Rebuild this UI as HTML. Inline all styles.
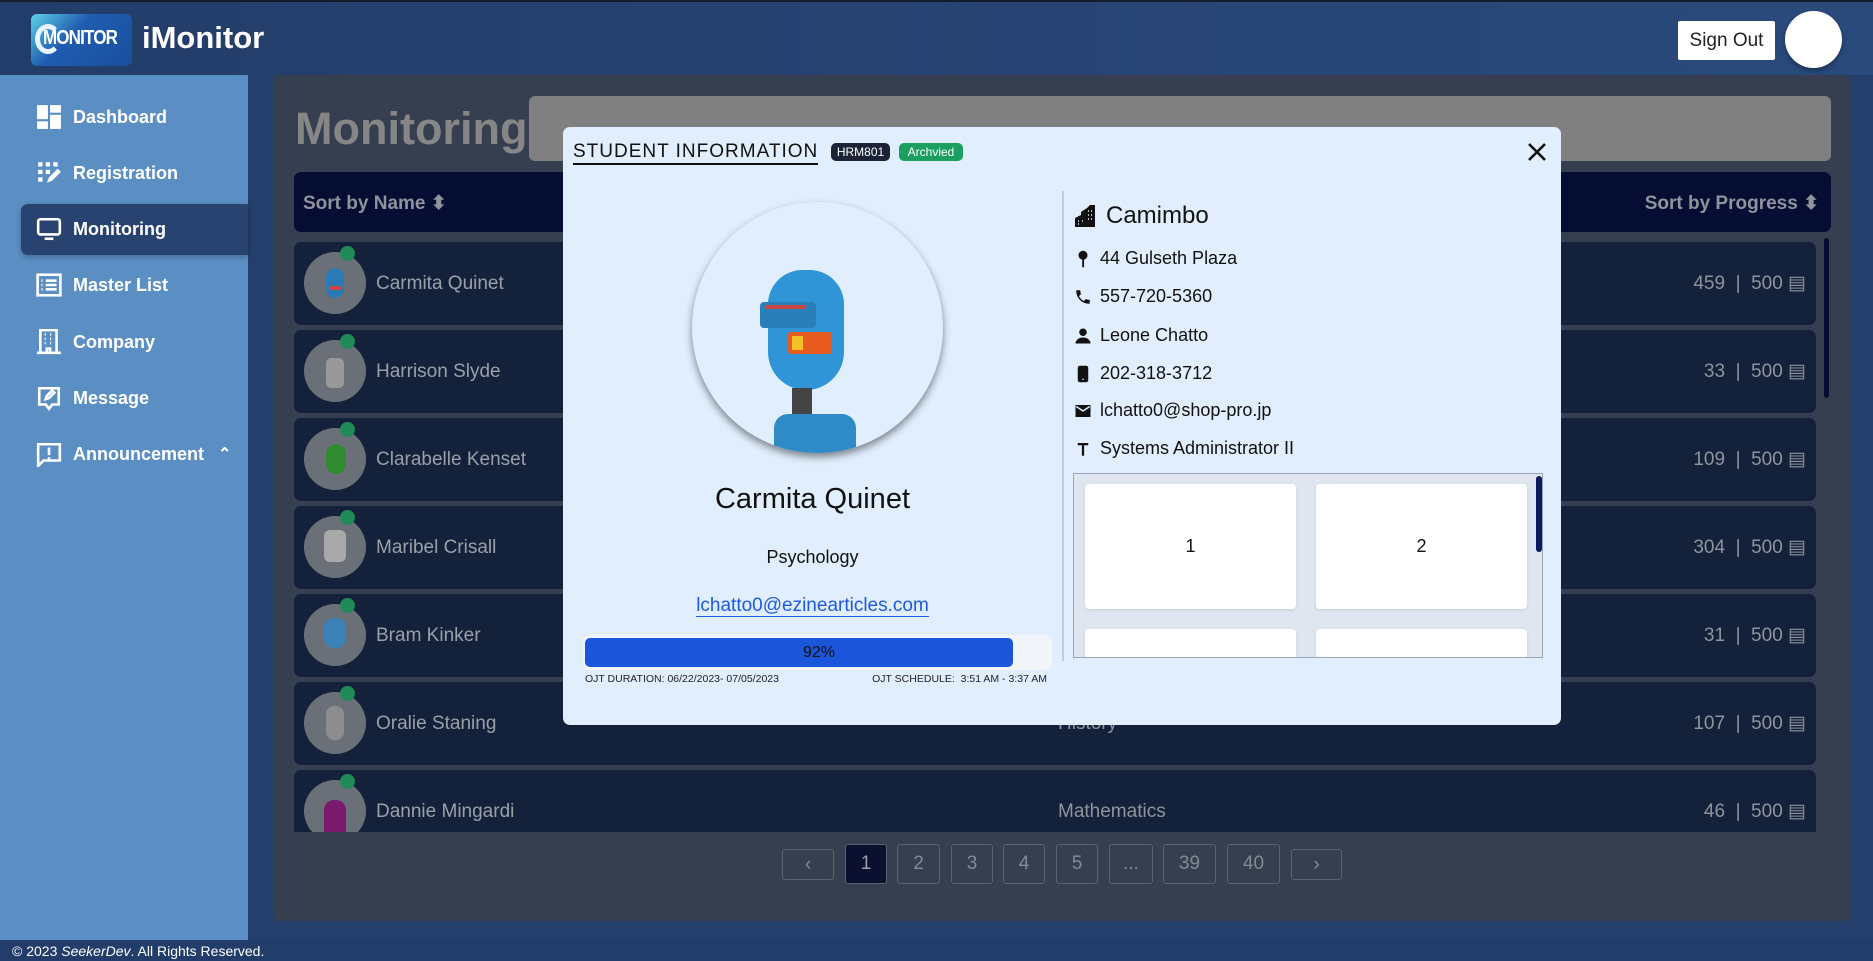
<!DOCTYPE html>
<html><head><meta charset="utf-8">
<style>
*{box-sizing:border-box;margin:0;padding:0}
body{width:1873px;height:961px;overflow:hidden;font-family:"Liberation Sans",sans-serif;background:#243f6c;position:relative}
.abs{position:absolute}
#hdr{left:0;top:0;width:1873px;height:75px;background:linear-gradient(90deg,#233d6a,#2a4a7c);border-top:2px solid #151d2c}
#side{left:0;top:75px;width:248px;height:865px;background:#5b8fc3}
.nav{position:absolute;left:36px;height:30px;color:#fff;font-weight:bold;font-size:18px;display:flex;align-items:center}
.nav svg{width:26px;height:26px;margin-right:11px;fill:none;stroke:#fff;stroke-width:2.4}
#act{left:21px;top:204px;width:227px;height:51px;background:#28436f;border-radius:7px 0 0 7px;box-shadow:0 2px 6px rgba(0,0,0,.25)}
#foot{left:0;top:940px;width:1873px;height:21px;background:#233d6b;color:#fff;font-size:14px;padding:3px 0 0 12px}
#panel{left:274px;top:75px;width:1576px;height:846px;background:#363f50;border-radius:4px;overflow:hidden}
.row{position:absolute;left:20px;width:1522px;height:83px;background:#14213a;border-radius:7px}
.av{position:absolute;left:10px;top:10px;width:62px;height:62px;border-radius:50%;background:#6b7078;overflow:hidden}
.dot{position:absolute;left:46px;top:4px;width:15px;height:15px;border-radius:50%;background:#1f8a58}
.nm{position:absolute;left:82px;top:0;line-height:83px;font-size:19px;color:#9aa0a8}
.pr{position:absolute;right:10px;top:0;line-height:83px;font-size:19px;color:#8f949c}
.sub{position:absolute;left:764px;top:0;line-height:83px;font-size:19px;color:#8f949c}
.pg{position:absolute;top:844px;height:40px;border:1px solid #5a6170;border-radius:3px;color:#848a94;font-size:19px;text-align:center;line-height:38px}
#modal{left:563px;top:127px;width:998px;height:598px;background:#e0eefd;border-radius:7px}
.info{position:absolute;left:511px;font-size:18px;color:#111;display:flex;align-items:center}
.info svg{width:18px;height:18px;margin-right:8px;fill:#111}
.card{position:absolute;width:211px;height:125px;background:#fff;border-radius:4px;box-shadow:0 1px 3px rgba(0,0,0,.1);font-size:18px;text-align:center;line-height:125px;color:#111}
</style></head><body>
<div id="hdr" class="abs">
 <div class="abs" style="left:31px;top:12px;width:101px;height:52px;border-radius:6px;background:linear-gradient(135deg,#5fd0e8,#1f5db0 40%,#1a4e9e);overflow:hidden">
  <div class="abs" style="left:4px;top:10px;width:26px;height:30px;border:5px solid #e8f4ff;border-radius:50%;border-right-color:transparent"></div>
  <div class="abs" style="left:12px;top:13px;color:#fff;font-weight:bold;font-size:20px;letter-spacing:-1px;transform:scaleX(.85);transform-origin:left">MONITOR</div>
 </div>
 <div class="abs" style="left:142px;top:18px;color:#fff;font-weight:bold;font-size:31px">iMonitor</div>
 <div class="abs" style="left:1678px;top:19px;width:97px;height:39px;background:#fff;border-radius:2px;font-size:19px;line-height:39px;text-align:center;color:#222">Sign Out</div>
 <div class="abs" style="left:1785px;top:9px;width:57px;height:57px;border-radius:50%;background:#fff;box-shadow:0 3px 5px rgba(0,0,0,.3)"></div>
</div>
<div id="side" class="abs"></div>
<div id="act" class="abs"></div>
<div class="nav" style="top:102px"><svg viewBox="0 0 24 24" style="fill:#fff;stroke:none"><rect x="1" y="1" width="10" height="13"/><rect x="13" y="1" width="10" height="7"/><rect x="1" y="16" width="10" height="7"/><rect x="13" y="10" width="10" height="13"/></svg>Dashboard</div>
<div class="nav" style="top:158px"><svg viewBox="0 0 24 24" style="fill:#fff;stroke:none"><rect x="2" y="2" width="4" height="4"/><rect x="9" y="2" width="4" height="4"/><rect x="16" y="2" width="4" height="4"/><rect x="2" y="9" width="4" height="4"/><rect x="9" y="9" width="4" height="4"/><rect x="2" y="16" width="4" height="4"/><path d="M10 21l2-5 8-8 3 3-8 8z"/></svg>Registration</div>
<div class="nav" style="top:214px"><svg viewBox="0 0 24 24"><rect x="2" y="3" width="20" height="14" rx="2"/><path d="M8 21h8"/></svg>Monitoring</div>
<div class="nav" style="top:270px"><svg viewBox="0 0 24 24"><rect x="1.5" y="2.5" width="21" height="19"/><path d="M9 8h10M9 12h10M9 16h10M5 8h1M5 12h1M5 16h1"/></svg>Master List</div>
<div class="nav" style="top:327px"><svg viewBox="0 0 24 24"><path d="M4 22V1h15v21M1 22h22M8 5h1M13 5h1M8 9h1M13 9h1M8 13h1M13 13h1M10 22v-4h3v4"/></svg>Company</div>
<div class="nav" style="top:383px"><svg viewBox="0 0 24 24"><path d="M3 3h18v15h-6l-3 4-3-4H3z"/><path d="M9 13l1-3 5-5 2 2-5 5z"/></svg>Message</div>
<div class="nav" style="top:439px"><svg viewBox="0 0 24 24"><path d="M2 3h20v15H7l-5 5z"/><path d="M12 6v7M12 15v2"/></svg>Announcement<span style="margin-left:14px;font-size:16px">&#8963;</span></div>
<div id="panel" class="abs">
 <div class="abs" style="left:21px;top:28px;font-size:45px;font-weight:bold;color:#868686">Monitoring</div>
 <div class="abs" style="left:255px;top:21px;width:1302px;height:65px;background:#808080;border-radius:6px"></div>
 <div class="abs" style="left:20px;top:97px;width:1537px;height:60px;background:#050d33;border-radius:7px;color:#8f949c;font-weight:bold;font-size:19px">
  <span class="abs" style="left:9px;top:20px">Sort by Name &#11021;</span>
  <span class="abs" style="right:12px;top:20px">Sort by Progress &#11021;</span>
 </div>
 <div class="abs" style="left:0;top:167px;width:1576px;height:590px;overflow:hidden">
  <div class="row" style="top:0"><div class="av"><div class="abs" style="left:22px;top:16px;width:18px;height:30px;border-radius:9px;background:#2a7ab5"></div><div class="abs" style="left:25px;top:34px;width:12px;height:4px;background:#c44"></div></div><div class="dot"></div><div class="nm">Carmita Quinet</div><div class="pr">459 &nbsp;|&nbsp; 500 &#9636;</div></div>
  <div class="row" style="top:88px"><div class="av"><div class="abs" style="left:22px;top:18px;width:18px;height:30px;border-radius:5px;background:#999"></div></div><div class="dot"></div><div class="nm">Harrison Slyde</div><div class="pr">33 &nbsp;|&nbsp; 500 &#9636;</div></div>
  <div class="row" style="top:176px"><div class="av"><div class="abs" style="left:22px;top:16px;width:20px;height:30px;border-radius:10px;background:#2f8a30"></div></div><div class="dot"></div><div class="nm">Clarabelle Kenset</div><div class="pr">109 &nbsp;|&nbsp; 500 &#9636;</div></div>
  <div class="row" style="top:264px"><div class="av"><div class="abs" style="left:20px;top:14px;width:22px;height:32px;border-radius:6px;background:#a9a9a9"></div></div><div class="dot"></div><div class="nm">Maribel Crisall</div><div class="pr">304 &nbsp;|&nbsp; 500 &#9636;</div></div>
  <div class="row" style="top:352px"><div class="av"><div class="abs" style="left:20px;top:14px;width:22px;height:30px;border-radius:10px;background:#3a82b8"></div></div><div class="dot"></div><div class="nm">Bram Kinker</div><div class="pr">31 &nbsp;|&nbsp; 500 &#9636;</div></div>
  <div class="row" style="top:440px"><div class="av"><div class="abs" style="left:22px;top:14px;width:18px;height:34px;border-radius:8px;background:#8d8d8d"></div></div><div class="dot"></div><div class="nm">Oralie Staning</div><div class="sub">History</div><div class="pr">107 &nbsp;|&nbsp; 500 &#9636;</div></div>
  <div class="row" style="top:528px"><div class="av"><div class="abs" style="left:20px;top:20px;width:22px;height:40px;border-radius:10px;background:#7a1a6e"></div></div><div class="dot"></div><div class="nm">Dannie Mingardi</div><div class="sub">Mathematics</div><div class="pr">46 &nbsp;|&nbsp; 500 &#9636;</div></div>
 </div>
 <div class="abs" style="left:1550px;top:163px;width:5px;height:160px;background:#050d33;border-radius:3px"></div>
</div>
<div class="pg" style="left:782px;width:52px;top:849px;height:31px;line-height:29px">&#8249;</div>
<div class="pg" style="left:845px;width:42px;background:#0b1030;color:#9aa0aa">1</div>
<div class="pg" style="left:897px;width:43px">2</div>
<div class="pg" style="left:951px;width:42px">3</div>
<div class="pg" style="left:1003px;width:42px">4</div>
<div class="pg" style="left:1056px;width:42px">5</div>
<div class="pg" style="left:1109px;width:44px">...</div>
<div class="pg" style="left:1163px;width:53px">39</div>
<div class="pg" style="left:1227px;width:53px">40</div>
<div class="pg" style="left:1291px;width:51px;top:849px;height:31px;line-height:29px">&#8250;</div>
<div id="foot" class="abs">© 2023 <i>SeekerDev</i>. All Rights Reserved.</div>

<div id="modal" class="abs">
 <div class="abs" style="left:10px;top:14px;font-size:19px;letter-spacing:1px;color:#111;border-bottom:2px solid #111;line-height:22px">STUDENT INFORMATION</div>
 <div class="abs" style="left:268px;top:16px;width:59px;height:18px;background:#1b2436;color:#fff;border-radius:5px;font-size:12px;text-align:center;line-height:18px">HRM801</div>
 <div class="abs" style="left:336px;top:16px;width:64px;height:18px;background:#1a9f5f;color:#fff;border-radius:5px;font-size:12px;text-align:center;line-height:18px">Archvied</div>
 <svg class="abs" style="left:964px;top:15px" width="20" height="20" viewBox="0 0 20 20"><path d="M2 2L18 18M18 2L2 18" stroke="#111" stroke-width="2.6"/></svg>
 <div class="abs" style="left:499px;top:64px;width:2px;height:470px;background:#c6ccd6"></div>
 <div class="abs" style="left:129px;top:75px;width:251px;height:251px;border-radius:50%;background:#e0eefd;box-shadow:0 4px 8px rgba(0,0,0,.45);overflow:hidden">
  <div class="abs" style="left:76px;top:68px;width:76px;height:120px;border-radius:38px 38px 42px 42px;background:#2f95d6"></div>
  <div class="abs" style="left:68px;top:100px;width:56px;height:26px;background:#2b7fb8;border-radius:4px"></div>
  <div class="abs" style="left:74px;top:103px;width:40px;height:4px;background:#c44"></div>
  <div class="abs" style="left:96px;top:130px;width:44px;height:22px;background:#e85b1e;border-radius:3px"></div>
  <div class="abs" style="left:100px;top:134px;width:11px;height:14px;background:#f3c02a"></div>
  <div class="abs" style="left:100px;top:186px;width:20px;height:30px;background:#444"></div>
  <div class="abs" style="left:82px;top:212px;width:82px;height:50px;background:#2f8ac8;border-radius:14px"></div>
 </div>
 <div class="abs" style="left:0;width:499px;top:356px;text-align:center;font-size:29px;color:#111">Carmita Quinet</div>
 <div class="abs" style="left:0;width:499px;top:420px;text-align:center;font-size:18px;color:#111">Psychology</div>
 <div class="abs" style="left:0;width:499px;top:468px;text-align:center;font-size:19px"><span style="color:#1e5adf;border-bottom:1.5px solid #1e5adf">lchatto0@ezinearticles.com</span></div>
 <div class="abs" style="left:20px;top:508px;width:469px;height:35px;background:#f1f4f8;border-radius:7px"></div>
 <div class="abs" style="left:22px;top:511px;width:428px;height:29px;background:#1b55d9;border-radius:5px;text-align:center;line-height:29px;font-size:16px;color:#111;padding-left:40px">92%</div>
 <div class="abs" style="left:22px;top:546px;font-size:10.5px;color:#222;white-space:nowrap">OJT DURATION: 06/22/2023- 07/05/2023</div>
 <div class="abs" style="left:224px;width:260px;text-align:right;top:546px;font-size:10.5px;color:#222;white-space:nowrap">OJT SCHEDULE: &nbsp;3:51 AM - 3:37 AM</div>

 <div class="info" style="top:75px;font-size:24px"><svg viewBox="0 0 24 24" style="width:24px;height:24px"><path d="M1 23V14l6-3v-3l6-4 3-3h5v22z"/><path d="M14 7h1M17 7h1M14 11h1M17 11h1M14 15h1M17 15h1M4 17h1M4 20h1M8 17h1" stroke="#e0eefd" stroke-width="1.5"/></svg>Camimbo</div>
 <div class="info" style="top:121px"><svg viewBox="0 0 24 24"><circle cx="12" cy="7" r="6"/><rect x="11" y="12" width="2.4" height="11"/></svg>44 Gulseth Plaza</div>
 <div class="info" style="top:159px"><svg viewBox="0 0 24 24"><path d="M6.6 10.8a15 15 0 0 0 6.6 6.6l2.2-2.2c.3-.3.7-.4 1-.2 1.1.4 2.3.6 3.6.6.6 0 1 .4 1 1V20c0 .6-.4 1-1 1A17 17 0 0 1 3 4c0-.6.4-1 1-1h3.5c.6 0 1 .4 1 1 0 1.3.2 2.5.6 3.6.1.3 0 .7-.2 1z"/></svg>557-720-5360</div>
 <div class="info" style="top:198px"><svg viewBox="0 0 24 24"><circle cx="12" cy="7" r="5"/><path d="M2 22c0-5 5-8 10-8s10 3 10 8z"/></svg>Leone Chatto</div>
 <div class="info" style="top:236px"><svg viewBox="0 0 24 24"><rect x="5" y="1" width="14" height="22" rx="3"/><circle cx="12" cy="19" r="1" fill="#e0eefd"/></svg>202-318-3712</div>
 <div class="info" style="top:273px"><svg viewBox="0 0 24 24"><path d="M2 4h20v16H2z"/><path d="M3 6l9 6 9-6" stroke="#e0eefd" stroke-width="2" fill="none"/></svg>lchatto0@shop-pro.jp</div>
 <div class="info" style="top:311px"><svg viewBox="0 0 24 24"><path d="M5 4h14v3h-5.5v14h-3V7H5z"/></svg>Systems Administrator II</div>
 <div class="abs" style="left:510px;top:346px;width:470px;height:185px;background:#dfe6ef;border:1px solid #9aa6b8;overflow:hidden">
  <div class="card" style="left:11px;top:10px">1</div>
  <div class="card" style="left:242px;top:10px">2</div>
  <div class="card" style="left:11px;top:155px">3</div>
  <div class="card" style="left:242px;top:155px">4</div>
  <div class="abs" style="left:462px;top:2px;width:6px;height:76px;background:#0b1a5e;border-radius:3px"></div>
 </div>
</div>
</body></html>
